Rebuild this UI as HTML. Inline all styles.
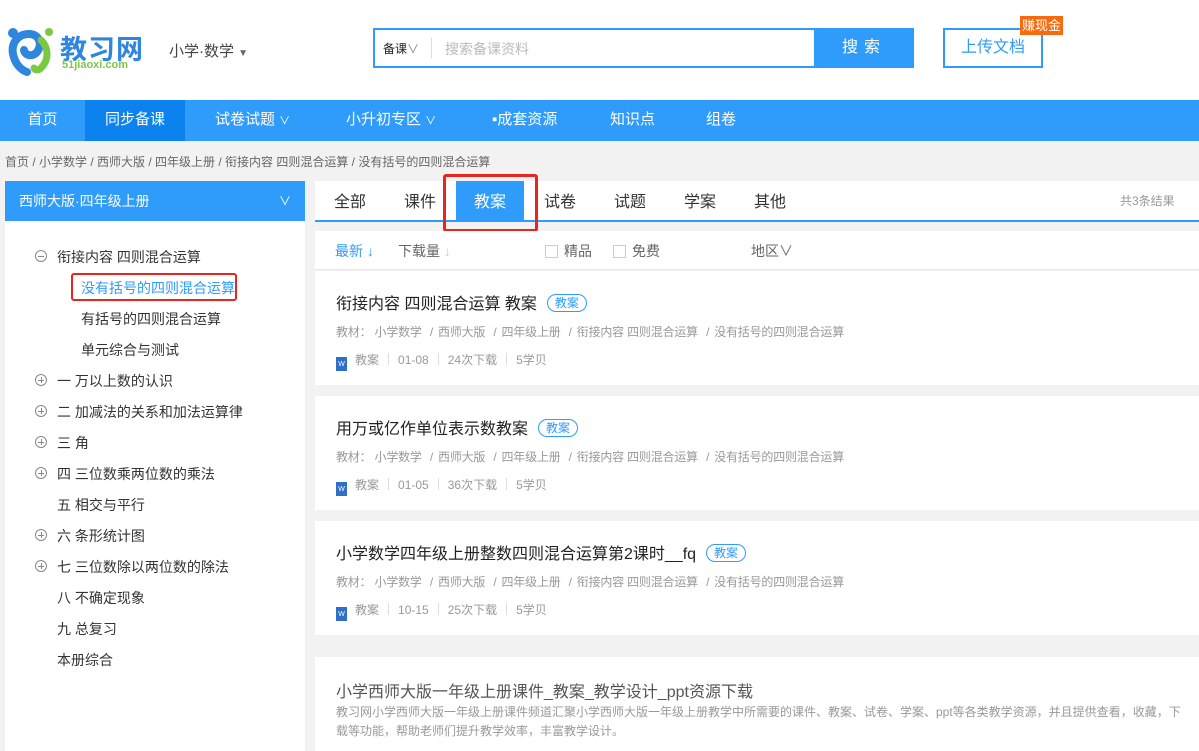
<!DOCTYPE html>
<html><head><meta charset="utf-8"><style>
*{margin:0;padding:0;box-sizing:border-box}
body{width:1199px;height:751px;overflow:hidden;background:#f2f2f2;font-family:"Liberation Sans","Noto Sans CJK SC",sans-serif;color:#333;position:relative}
.a{position:absolute;white-space:nowrap}
.hdr{position:absolute;left:0;top:0;width:1199px;height:100px;background:#fff}
.nav{position:absolute;left:0;top:100px;width:1199px;height:41px;background:#2f9bfb}
.nav span{position:absolute;top:0;line-height:40px;color:#fff;font-size:15px}
.w{background:#fff;position:absolute}
.tree{font-size:14px;color:#333}
.ci{position:absolute;width:12px;height:12px;border:1px solid #888;border-radius:50%}
.ci:before{content:"";position:absolute;left:2px;top:5px;width:6px;height:1px;background:#888}
.ci.p:after{content:"";position:absolute;left:5px;top:2px;width:1px;height:6px;background:#888}
.tag{display:inline-block;border:1px solid #2f9bfb;color:#2f9bfb;border-radius:10px;font-size:12px;line-height:16px;padding:0 7px;margin-left:10px;vertical-align:2px}
.t{font-size:16px;color:#222}
.m{font-size:12px;color:#999;letter-spacing:-0.2px}
.m i{font-style:normal;margin:0 5px}
.d{font-size:12px;color:#999}
.d b{font-weight:normal;display:inline-block;width:1px;height:12px;background:#ddd;margin:0 9px;vertical-align:-1px}
.wi{display:inline-block;width:11px;height:14px;background:#2f6fc8;vertical-align:-2px;margin-right:8px;color:#fff;font-size:7px;text-align:center;line-height:16px}
.cb{display:inline-block;width:13px;height:13px;border:1px solid #ccc;vertical-align:-2px;margin-right:6px}
</style></head><body>
<div class="hdr"></div>
<svg class="a" style="left:5px;top:26px" width="50" height="50" viewBox="0 0 50 50">
<circle cx="8" cy="7" r="5" fill="#2e86de"/>
<path d="M24 8 C12 8 6 18 8 28 C10 38 16 44 22 46" fill="none" stroke="#2e86de" stroke-width="8" stroke-linecap="round"/>
<path d="M24 8 C34 8 38 18 32 26 C28 31 20 30 19 24" fill="none" stroke="#2e86de" stroke-width="8" stroke-linecap="round"/>
<path d="M36 14 C44 22 44 34 36 42 C33 45 30 44 29 42" fill="none" stroke="#7ac943" stroke-width="7" stroke-linecap="round"/>
<circle cx="44" cy="6" r="4" fill="#7ac943"/>
</svg>
<div class="a" style="left:60px;top:28px;font-size:27px;font-weight:bold;color:#2e86de;letter-spacing:1px">教习网</div>
<div class="a" style="left:62px;top:59px;font-size:11px;font-weight:bold;color:#7ac943">51jiaoxi.com</div>
<div class="a" style="left:169px;top:40px;font-size:15px;color:#444">小学·数学 <span style="font-size:10px;color:#666">▼</span></div>
<div class="a" style="left:373px;top:28px;width:541px;height:40px;border:2px solid #2f9bfb;background:#fff"></div>
<div class="a" style="left:383px;top:40px;font-size:12px;color:#222">备课<span style="color:#888">∨</span></div>
<div class="a" style="left:431px;top:38px;width:1px;height:20px;background:#ddd"></div>
<div class="a" style="left:445px;top:39px;font-size:14px;color:#bbb">搜索备课资料</div>
<div class="a" style="left:814px;top:28px;width:100px;height:40px;background:#2f9bfb;color:#fff;font-size:16px;text-align:center;line-height:40px;letter-spacing:6px">搜索</div>
<div class="a" style="left:943px;top:28px;width:100px;height:40px;border:2px solid #2f9bfb;color:#2f9bfb;font-size:16px;text-align:center;line-height:36px">上传文档</div>
<div class="a" style="left:1020px;top:16px;width:43px;height:19px;background:#f76b0f;color:#fff;font-size:13px;text-align:center;line-height:19px">赚现金</div>

<div class="nav">
<span style="left:0;width:85px;text-align:center">首页</span>
<span style="left:85px;width:100px;background:#0b82ee;text-align:center;height:41px">同步备课</span>
<span style="left:215px">试卷试题 <small style="font-size:11px">∨</small></span>
<span style="left:346px">小升初专区 <small style="font-size:11px">∨</small></span>
<span style="left:492px">▪成套资源</span>
<span style="left:610px">知识点</span>
<span style="left:706px">组卷</span>
</div>
<div class="a" style="left:5px;top:153px;font-size:12px;color:#666">首页 /  小学数学 / 西师大版 / 四年级上册 / 衔接内容 四则混合运算 / 没有括号的四则混合运算</div>

<div class="w" style="left:5px;top:181px;width:300px;height:570px"></div>
<div class="a" style="left:5px;top:181px;width:300px;height:40px;background:#2f9bfb;color:#fff;font-size:14px;line-height:40px;padding-left:14px">西师大版·四年级上册<span style="position:absolute;right:14px;font-size:12px">∨</span></div>
<div class="tree">
<span class="ci" style="left:35px;top:250px"></span><div class="a" style="left:57px;top:247px">衔接内容 四则混合运算</div>
<div class="a" style="left:71px;top:273px;width:166px;height:28px;border:2px solid #e8261f;border-radius:3px"></div>
<div class="a" style="left:81px;top:278px;color:#2f9bfb">没有括号的四则混合运算</div>
<div class="a" style="left:81px;top:309px">有括号的四则混合运算</div>
<div class="a" style="left:81px;top:340px">单元综合与测试</div>
<span class="ci p" style="left:35px;top:374px"></span><div class="a" style="left:57px;top:371px">一 万以上数的认识</div>
<span class="ci p" style="left:35px;top:405px"></span><div class="a" style="left:57px;top:402px">二 加减法的关系和加法运算律</div>
<span class="ci p" style="left:35px;top:436px"></span><div class="a" style="left:57px;top:433px">三 角</div>
<span class="ci p" style="left:35px;top:467px"></span><div class="a" style="left:57px;top:464px">四 三位数乘两位数的乘法</div>
<div class="a" style="left:57px;top:495px">五 相交与平行</div>
<span class="ci p" style="left:35px;top:529px"></span><div class="a" style="left:57px;top:526px">六 条形统计图</div>
<span class="ci p" style="left:35px;top:560px"></span><div class="a" style="left:57px;top:557px">七 三位数除以两位数的除法</div>
<div class="a" style="left:57px;top:588px">八 不确定现象</div>
<div class="a" style="left:57px;top:619px">九 总复习</div>
<div class="a" style="left:57px;top:650px">本册综合</div>
</div>

<div class="w" style="left:315px;top:181px;width:884px;height:41px;border-bottom:2px solid #2f9bfb"></div>
<div class="a" style="left:456px;top:181px;width:68px;height:39px;background:#2f9bfb"></div>
<div class="a" style="left:443px;top:174px;width:95px;height:58px;border:3px solid #e8261f;border-radius:3px"></div>
<div class="a" style="top:188px;left:334px;font-size:16px">全部</div>
<div class="a" style="top:188px;left:404px;font-size:16px">课件</div>
<div class="a" style="top:188px;left:474px;font-size:16px;color:#fff">教案</div>
<div class="a" style="top:188px;left:544px;font-size:16px">试卷</div>
<div class="a" style="top:188px;left:614px;font-size:16px">试题</div>
<div class="a" style="top:188px;left:684px;font-size:16px">学案</div>
<div class="a" style="top:188px;left:754px;font-size:16px">其他</div>
<div class="a" style="top:192px;left:1120px;font-size:12px;color:#999">共3条结果</div>

<div class="w" style="left:315px;top:231px;width:884px;height:39px;border-bottom:1px solid #e8e8e8"></div>
<div class="a" style="top:241px;left:335px;font-size:14px;color:#2f9bfb">最新 <b>↓</b></div>
<div class="a" style="top:241px;left:398px;font-size:14px;color:#666">下载量 <span style="color:#ccc">↓</span></div>
<div class="a" style="top:241px;left:545px;font-size:14px;color:#666"><span class="cb"></span>精品</div>
<div class="a" style="top:241px;left:613px;font-size:14px;color:#666"><span class="cb"></span>免费</div>
<div class="a" style="top:241px;left:751px;font-size:14px;color:#666">地区∨</div>

<div class="w" style="left:315px;top:271px;width:884px;height:114px"></div>
<div class="a t" style="left:336px;top:290px">衔接内容 四则混合运算 教案<span class="tag">教案</span></div>
<div class="a m" style="left:336px;top:323px">教材： 小学数学 <i>/</i>西师大版 <i>/</i>四年级上册 <i>/</i>衔接内容 四则混合运算 <i>/</i>没有括号的四则混合运算</div>
<div class="a d" style="left:336px;top:351px"><span class="wi">W</span>教案<b></b>01-08<b></b>24次下载<b></b>5学贝</div>

<div class="w" style="left:315px;top:396px;width:884px;height:114px"></div>
<div class="a t" style="left:336px;top:415px">用万或亿作单位表示数教案<span class="tag">教案</span></div>
<div class="a m" style="left:336px;top:448px">教材： 小学数学 <i>/</i>西师大版 <i>/</i>四年级上册 <i>/</i>衔接内容 四则混合运算 <i>/</i>没有括号的四则混合运算</div>
<div class="a d" style="left:336px;top:476px"><span class="wi">W</span>教案<b></b>01-05<b></b>36次下载<b></b>5学贝</div>

<div class="w" style="left:315px;top:521px;width:884px;height:114px"></div>
<div class="a t" style="left:336px;top:540px">小学数学四年级上册整数四则混合运算第2课时__fq<span class="tag">教案</span></div>
<div class="a m" style="left:336px;top:573px">教材： 小学数学 <i>/</i>西师大版 <i>/</i>四年级上册 <i>/</i>衔接内容 四则混合运算 <i>/</i>没有括号的四则混合运算</div>
<div class="a d" style="left:336px;top:601px"><span class="wi">W</span>教案<b></b>10-15<b></b>25次下载<b></b>5学贝</div>

<div class="w" style="left:315px;top:657px;width:884px;height:94px"></div>
<div class="a" style="left:336px;top:678px;font-size:16px;color:#555">小学西师大版一年级上册课件_教案_教学设计_ppt资源下载</div>
<div class="a" style="left:336px;top:703px;width:850px;white-space:normal;font-size:12px;color:#999;line-height:19px">教习网小学西师大版一年级上册课件频道汇聚小学西师大版一年级上册教学中所需要的课件、教案、试卷、学案、ppt等各类教学资源，并且提供查看，收藏，下载等功能，帮助老师们提升教学效率，丰富教学设计。</div>
</body></html>
